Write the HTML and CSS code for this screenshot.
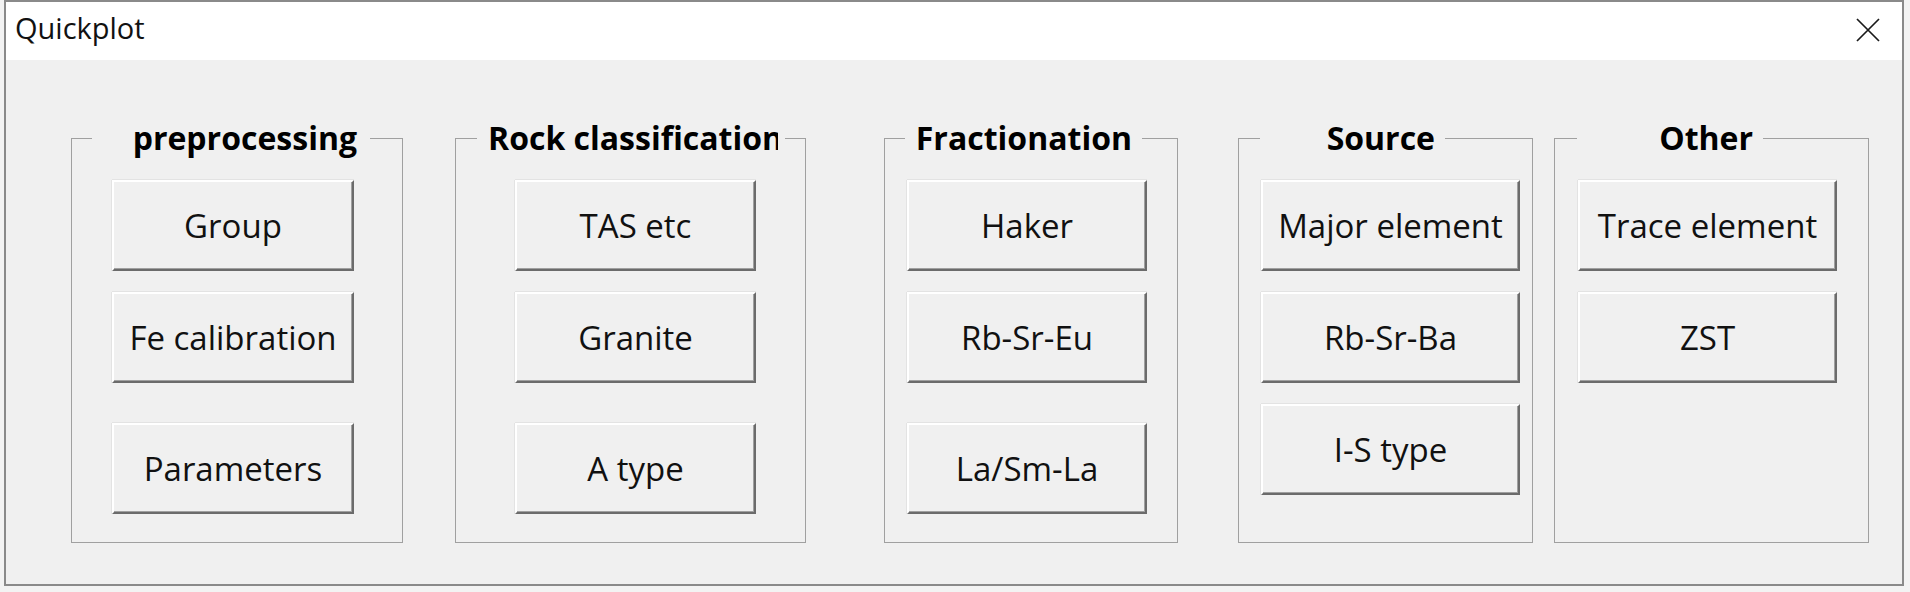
FILE: index.html
```html
<!DOCTYPE html>
<html>
<head>
<meta charset="utf-8">
<title>Quickplot</title>
<link rel="stylesheet" href="styles.css">
</head>
<body>
<div class="window">
  <div class="titlebar">
    <span class="title">Quickplot</span>
    <svg class="close" width="24" height="24" viewBox="0 0 24 24" aria-label="Close">
      <path d="M1 1 L23 23 M23 1 L1 23" stroke="#1a1a1a" stroke-width="1.7" fill="none"/>
    </svg>
  </div>
  <div class="content">
    <fieldset class="group g-pre">
      <legend class="lg lg-pre"><span class="lt">preprocessing</span></legend>
      <div class="btns">
        <div class="btn">Group</div>
        <div class="btn">Fe calibration</div>
        <div class="btn far">Parameters</div>
      </div>
    </fieldset>
    <fieldset class="group g-rock">
      <legend class="lg lg-rock"><span class="lt clip">Rock classification</span></legend>
      <div class="btns">
        <div class="btn">TAS etc</div>
        <div class="btn">Granite</div>
        <div class="btn far">A type</div>
      </div>
    </fieldset>
    <fieldset class="group g-frac">
      <legend class="lg lg-frac"><span class="lt">Fractionation</span></legend>
      <div class="btns">
        <div class="btn">Haker</div>
        <div class="btn">Rb-Sr-Eu</div>
        <div class="btn far">La/Sm-La</div>
      </div>
    </fieldset>
    <fieldset class="group g-src">
      <legend class="lg lg-src"><span class="lt">Source</span></legend>
      <div class="btns">
        <div class="btn">Major element</div>
        <div class="btn">Rb-Sr-Ba</div>
        <div class="btn">I-S type</div>
      </div>
    </fieldset>
    <fieldset class="group g-oth">
      <legend class="lg lg-oth"><span class="lt">Other</span></legend>
      <div class="btns">
        <div class="btn">Trace element</div>
        <div class="btn">ZST</div>
      </div>
    </fieldset>
  </div>
</div>
</body>
</html>
```

FILE: styles.css
```css
html, body {
  margin: 0;
  padding: 0;
}
body {
  background: #f3f3f3;
  width: 1910px;
  height: 592px;
  overflow: hidden;
  font-family: "Open Sans", "Noto Sans", "Liberation Sans", sans-serif;
  color: #000;
}
.window {
  box-sizing: border-box;
  margin-left: 4px;
  width: 1900px;
  height: 586px;
  border: 2px solid #8a8a8a;
  background: #f0f0f0;
  display: flex;
  flex-direction: column;
}
.titlebar {
  height: 58px;
  background: #ffffff;
  display: flex;
  justify-content: space-between;
  align-items: flex-start;
  padding: 0 22px 0 9px;
  flex: none;
}
.title {
  font-size: 29px;
  line-height: 40px;
  padding-top: 6px;
  color: #111;
}
.close {
  margin-top: 16px;
  display: block;
}
.content {
  flex: 1;
  display: flex;
  align-items: flex-start;
  padding: 58px 0 0 65px;
}
.group {
  box-sizing: border-box;
  margin: 0;
  padding: 0;
  min-width: 0;
  height: 425px;
  border: 1px solid #a0a0a0;
  flex: none;
}
.g-pre { width: 332px; }
.g-rock { width: 351px; margin-left: 52px; }
.g-frac { width: 294px; margin-left: 78px; }
.g-src { width: 295px; margin-left: 60px; }
.g-oth { width: 315px; margin-left: 21px; }

.lg {
  box-sizing: border-box;
  padding: 0;
  font-size: 32px;
  font-weight: 700;
  line-height: 40px;
  height: 40px;
  text-align: left;
}
.lt {
  display: block;
  box-sizing: border-box;
  width: 100%;
  text-align: right;
  white-space: nowrap;
  padding-right: 10px;
  color: #000;
}
.lg-pre { margin-left: 20px; width: 278px; }
.lg-pre .lt { padding-right: 13px; }
.lg-rock { margin-left: 21px; width: 308px; }
.lg-frac { margin-left: 20px; width: 237px; }
.lg-src { margin-left: 21px; width: 185px; }
.lg-oth { margin-left: 22px; width: 186px; }
.lg-rock .clip {
  text-align: left;
  padding: 0;
  margin-left: 11px;
  width: 290px;
  overflow: hidden;
}

.btns {
  display: flex;
  flex-direction: column;
  gap: 21px;
  padding-top: 22px;
}
.g-pre .btns { padding-left: 40px; }
.g-rock .btns { padding-left: 59px; }
.g-frac .btns { padding-left: 22px; }
.g-src .btns { padding-left: 22px; }
.g-oth .btns { padding-left: 23px; }

.btn {
  box-sizing: border-box;
  height: 91px;
  width: 242px;
  background: #f0f0f0;
  border-top: 2px solid #ffffff;
  border-left: 2px solid #ffffff;
  border-right: 2px solid #6b6b6b;
  border-bottom: 2px solid #6b6b6b;
  box-shadow: inset -1px -1px 0 #a0a0a0, 0 -1px 0 #e3e3e3, -1px 0 0 #e3e3e3;
  display: flex;
  align-items: center;
  justify-content: center;
  font-size: 33px;
  white-space: nowrap;
  color: #111;
}
.g-rock .btn { width: 241px; }
.g-frac .btn { width: 240px; }
.g-src .btn, .g-oth .btn { width: 259px; }
.btn.far { margin-top: 19px; }
```
